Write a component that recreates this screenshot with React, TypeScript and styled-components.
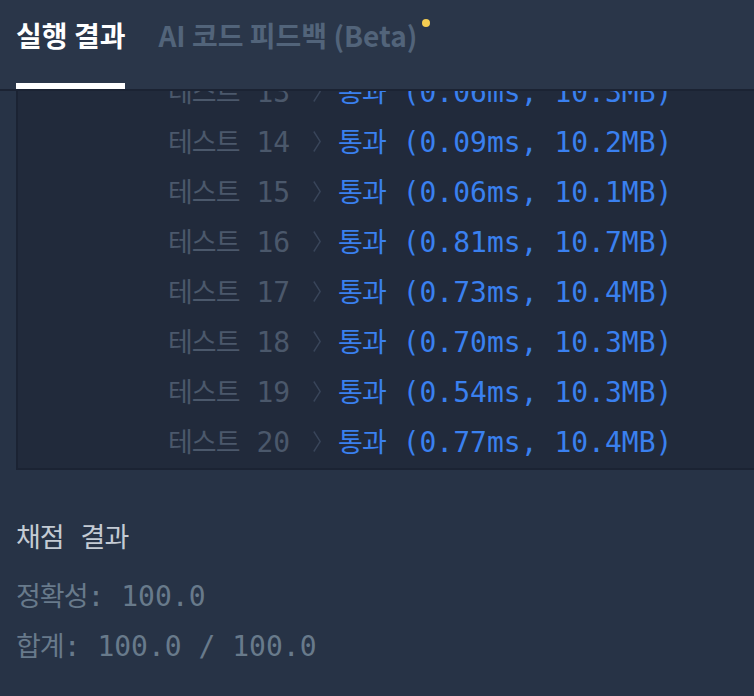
import React from 'react'
import styled, { createGlobalStyle } from 'styled-components'

type TestResult = {
	time: string
	memory: string
}

const results: TestResult[] = [
	{ time: '0.04', memory: '10.2' },
	{ time: '0.05', memory: '10.1' },
	{ time: '0.03', memory: '10.2' },
	{ time: '0.12', memory: '10.3' },
	{ time: '0.08', memory: '10.2' },
	{ time: '0.41', memory: '10.4' },
	{ time: '0.66', memory: '10.3' },
	{ time: '0.05', memory: '10.2' },
	{ time: '0.07', memory: '10.1' },
	{ time: '0.52', memory: '10.4' },
	{ time: '0.68', memory: '10.3' },
	{ time: '0.09', memory: '10.2' },
	{ time: '0.06', memory: '10.3' },
	{ time: '0.09', memory: '10.2' },
	{ time: '0.06', memory: '10.1' },
	{ time: '0.81', memory: '10.7' },
	{ time: '0.73', memory: '10.4' },
	{ time: '0.70', memory: '10.3' },
	{ time: '0.54', memory: '10.3' },
	{ time: '0.77', memory: '10.4' },
]

const GlobalStyle = createGlobalStyle`
  html, body {
    margin: 0;
    padding: 0;
    background: #273346;
    overflow: hidden;
  }
  * {
    box-sizing: border-box;
  }
`

const Chevron = () => (
	<ChevronSvg width="8" height="21" viewBox="0 0 8 21">
		<path d="M0.8 0.5 L7.2 10.5 L0.8 20.5" fill="none" stroke="#39455a" strokeWidth="1.4" />
	</ChevronSvg>
)

export default function App() {
	return (
		<>
			<GlobalStyle />
			<Page>
				<TabBar>
					<Tab $active>실행 결과</Tab>
					<Tab>
						AI 코드 피드백 (Beta)
						<Dot />
					</Tab>
				</TabBar>
				<Output>
					{results.map((r, i) => (
						<Row key={i}>
							<Label>
								<Ko>테스트</Ko> {i + 1}
							</Label>
							<Chevron />
							<Pass>
								<Ko>통과</Ko> ({r.time}ms, {r.memory}MB)
							</Pass>
						</Row>
					))}
				</Output>
				<Summary>
					<SummaryTitle>
						<Ko>채점</Ko> <Ko>결과</Ko>
					</SummaryTitle>
					<SummaryLine>
						<Ko>정확성</Ko>: 100.0
					</SummaryLine>
					<SummaryLine>
						<Ko>합계</Ko>: 100.0 / 100.0
					</SummaryLine>
				</Summary>
			</Page>
		</>
	)
}

const Page = styled.div`
  width: 754px;
  height: 696px;
  background: #273346;
  display: flex;
  flex-direction: column;
  font-family: "DejaVu Sans Mono", "Noto Sans CJK KR", monospace;
`

const TabBar = styled.div`
  display: flex;
  gap: 33px;
  height: 91px;
  padding-left: 16px;
  background: #2a3649;
  border-bottom: 2px solid #1b2333;
`

const Tab = styled.div<{ $active?: boolean }>`
  position: relative;
  height: 89px;
  padding-top: 19px;
  font-family: "Noto Sans CJK KR", "Noto Sans", sans-serif;
  font-weight: 700;
  font-size: 28px;
  line-height: 32px;
  white-space: nowrap;
  color: ${(p) => (p.$active ? '#ffffff' : '#52647a')};
  border-bottom: 6px solid ${(p) => (p.$active ? '#ffffff' : 'transparent')};
`

const Dot = styled.span`
  position: absolute;
  right: -13px;
  top: 19px;
  width: 8px;
  height: 8px;
  border-radius: 50%;
  background: #f5cd52;
`

const Output = styled.div`
  margin-left: 16px;
  margin-right: -20px;
  height: 379px;
  display: flex;
  flex-direction: column;
  justify-content: flex-end;
  overflow: hidden;
  background: #212a3b;
  border-left: 2px solid #1b2333;
  border-bottom: 2px solid #1b2333;
  flex-shrink: 0;
`

const Row = styled.div`
  flex-shrink: 0;
  height: 50px;
  line-height: 50px;
  padding-left: 150px;
  font-size: 28px;
  white-space: pre;
`

const Ko = styled.span`
  font-family: "Noto Sans CJK KR", sans-serif;
  font-size: 27px;
  line-height: 1;
  letter-spacing: -1px;
`

const Label = styled.span`
  color: #4b586b;
`

const ChevronSvg = styled.svg`
  display: inline-block;
  margin: 0 17px 0 23px;
  vertical-align: baseline;
`

const Pass = styled.span`
  color: #3a80ef;
`

const Summary = styled.div`
  padding: 43px 16px 0;
  font-size: 28px;
  white-space: pre;
`

const SummaryTitle = styled.div`
  line-height: 50px;
  margin-bottom: 9px;
  color: #c4cbd4;
`

const SummaryLine = styled.div`
  line-height: 50px;
  color: #687a8b;
`
